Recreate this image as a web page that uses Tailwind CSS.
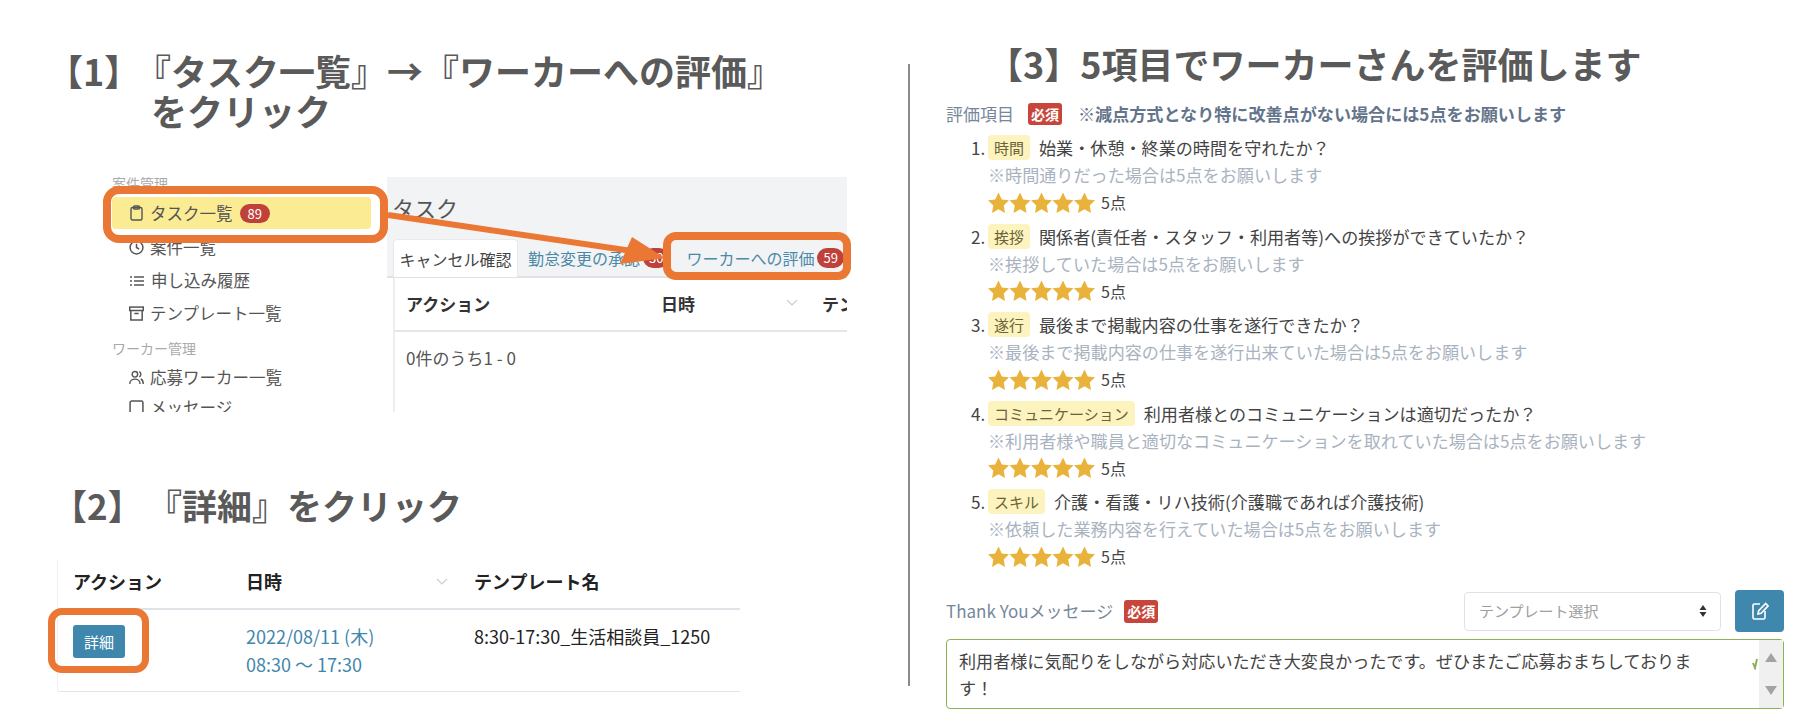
<!DOCTYPE html>
<html lang="ja">
<head>
    <meta charset="UTF-8">
    <title>ワーカーへの評価</title>
    <script src="https://cdn.jsdelivr.net/npm/@tailwindcss/browser@4"></script>
</head>
<body class="bg-white font-['Noto_Sans_CJK_JP','Noto_Sans',sans-serif] text-[#444]">

<svg width="0" height="0" class="absolute">
    <symbol id="stars" viewBox="0 0 107 22">
        <polygon fill="#e9b23b" points="10.5,0.5 13.8,7.5 21,8.3 15.7,13.4 17,21 10.5,17.3 4,21 5.3,13.4 0,8.3 7.2,7.5"/>
        <polygon fill="#e9b23b" transform="translate(21.5 0)" points="10.5,0.5 13.8,7.5 21,8.3 15.7,13.4 17,21 10.5,17.3 4,21 5.3,13.4 0,8.3 7.2,7.5"/>
        <polygon fill="#e9b23b" transform="translate(43 0)" points="10.5,0.5 13.8,7.5 21,8.3 15.7,13.4 17,21 10.5,17.3 4,21 5.3,13.4 0,8.3 7.2,7.5"/>
        <polygon fill="#e9b23b" transform="translate(64.5 0)" points="10.5,0.5 13.8,7.5 21,8.3 15.7,13.4 17,21 10.5,17.3 4,21 5.3,13.4 0,8.3 7.2,7.5"/>
        <polygon fill="#e9b23b" transform="translate(86 0)" points="10.5,0.5 13.8,7.5 21,8.3 15.7,13.4 17,21 10.5,17.3 4,21 5.3,13.4 0,8.3 7.2,7.5"/>
    </symbol>
</svg>

<div class="flex h-[722px] w-[1798px] overflow-hidden">

    <!-- 左カラム -->
    <div class="w-[908px] shrink-0 pt-[50px]">
        <h2 class="flex pl-[47px] text-[36px] leading-[40px] font-bold whitespace-nowrap text-[#5a5a5a]">
            <span class="w-[104px] shrink-0">【1】</span>
            <span><span class="-ml-[16px] inline-block">『タスク一覧』→『ワーカーへの評価』</span><br>をクリック</span>
        </h2>

        <!-- スクリーンショット1 -->
        <div class="relative ml-[100px] mt-[47px] h-[235px] w-[747px]">
            <div class="flex h-full overflow-hidden">
                <div class="w-[287px] shrink-0 pl-[12px] pr-4 text-[16.5px] text-[#555]">
                    <div class="h-[20px] text-[14px] leading-[12px] text-[#aaa]">案件管理</div>
                    <div class="flex h-[32px] items-center gap-[7px] rounded bg-[#fbec93] pl-[18px]">
                        <svg class="h-4 w-[13px]" viewBox="0 0 13 16" fill="none" stroke="#555" stroke-width="1.4"><rect x="1" y="2.5" width="11" height="12.5" rx="1.5"/><rect x="3.5" y="1" width="6" height="3" rx="1"/></svg>
                        <span>タスク一覧</span>
                        <span class="rounded-full bg-[#c0403a] px-2 text-[13px] leading-[19px] text-white">89</span>
                    </div>
                    <div class="flex h-[35px] items-center gap-[6px] pl-[17px] pt-[2px]">
                        <svg class="h-[15px] w-[15px]" viewBox="0 0 14 14" fill="none" stroke="#555" stroke-width="1.4"><circle cx="7" cy="7" r="6"/><path d="M7 3.5V7l2.5 1.5"/></svg>
                        <span>案件一覧</span>
                    </div>
                    <div class="flex h-[33px] items-center gap-[7px] pl-[18px]">
                        <svg class="h-[14px] w-[14px]" viewBox="0 0 14 14" fill="none" stroke="#555" stroke-width="1.3"><path d="M4 3h10M4 7h10M4 11h10M0 3h2M0 7h2M0 11h2"/></svg>
                        <span>申し込み履歴</span>
                    </div>
                    <div class="flex h-[33px] items-center gap-[6px] pl-[17px]">
                        <svg class="h-[15px] w-[15px]" viewBox="0 0 14 14" fill="none" stroke="#555" stroke-width="1.4"><rect x="0.7" y="1" width="12.6" height="3.2"/><path d="M1.7 4.2V13h10.6V4.2M5 7h4"/></svg>
                        <span>テンプレート一覧</span>
                    </div>
                    <div class="mt-[7px] h-[26px] text-[14px] leading-[22px] text-[#aaa]">ワーカー管理</div>
                    <div class="flex h-[29px] items-center gap-[6px] pl-[17px]">
                        <svg class="h-[15px] w-[15px]" viewBox="0 0 14 14" fill="none" stroke="#555" stroke-width="1.3"><circle cx="5.5" cy="4" r="2.6"/><path d="M0.7 13c0-6 9.6-6 9.6 0M9.5 1.6a2.6 2.6 0 0 1 0 4.8M11 8.4c1.5.6 2.3 2.4 2.3 4.6"/></svg>
                        <span>応募ワーカー一覧</span>
                    </div>
                    <div class="flex h-[30px] items-center gap-[6px] pl-[17px]">
                        <svg class="h-[15px] w-[15px]" viewBox="0 0 14 14" fill="none" stroke="#555" stroke-width="1.4"><rect x="1" y="1" width="12" height="12" rx="1.5"/></svg>
                        <span>メッセージ</span>
                    </div>
                </div>
                <div class="flex-1 overflow-hidden">
                    <div class="bg-[#f2f3f5]">
                        <div class="h-[63px] pl-[5px] pt-[15px] text-[22px] leading-[30px] text-[#555]">タスク</div>
                        <div class="flex h-[38px] items-center border-b-2 border-[#e0e2e5] pl-[6px] text-[16px] whitespace-nowrap">
                            <div class="flex h-[38px] w-[125px] items-center justify-center rounded-t border border-b-0 border-[#e8e9eb] bg-white text-[#444]">キャンセル確認</div>
                            <div class="ml-[10px] flex items-center gap-[3px] text-[#4a8aa8]">勤怠変更の承認<span class="rounded-full bg-[#c0403a] px-[6px] text-[13px] leading-[20px] text-white">30</span></div>
                            <div class="ml-[17px] flex items-center gap-[3px] text-[#4a8aa8]">ワーカーへの評価<span class="rounded-full bg-[#c0403a] px-[6px] text-[13px] leading-[20px] text-white">59</span></div>
                        </div>
                    </div>
                    <div class="ml-[6px] h-[140px] border-l-2 border-[#eee] text-[17px]">
                        <div class="grid h-[54px] grid-cols-[255px_161px_1fr] items-center border-b-2 border-[#e6e6e6] pl-[11px] font-bold whitespace-nowrap text-[#333]">
                            <span>アクション</span>
                            <span class="relative">日時
                                <svg class="absolute top-[8px] left-[125px] h-2 w-3" viewBox="0 0 12 8" fill="none" stroke="#ccc" stroke-width="1.2"><path d="M1 1l5 5 5-5"/></svg>
                            </span>
                            <span>テンプレート名</span>
                        </div>
                        <div class="pl-[11px] pt-[14px] leading-[24px] text-[#555]">0件のうち1 - 0</div>
                    </div>
                </div>
            </div>
            <!-- 注釈 -->
            <svg class="absolute top-0 left-0 h-[235px] w-[760px] overflow-visible" viewBox="100 177 760 235" fill="none">
                <rect x="107" y="190" width="277" height="49" rx="12" stroke="#ea7733" stroke-width="8"/>
                <rect x="667" y="236" width="180" height="40" rx="9" stroke="#ea7733" stroke-width="8"/>
                <path d="M388 215L632 251" stroke="#ea7733" stroke-width="6"/>
                <polygon points="632,237 665,258 620,264" fill="#ea7733"/>
            </svg>
        </div>

        <h2 class="mt-[73px] pl-[52px] text-[35px] leading-[40px] font-bold whitespace-nowrap text-[#5a5a5a]">
            <span class="inline-block w-[95px]">【2】</span>『詳細』をクリック
        </h2>

        <!-- スクリーンショット2 -->
        <div class="relative mt-[35px] ml-[57px] h-[131px] w-[683px] border-l border-[#f0f0f0] text-[18px] text-[#222]">
            <div class="grid h-[50px] grid-cols-[188px_228px_1fr] items-center border-b-2 border-[#dfe3e8] pb-[6px] font-bold">
                <span class="pl-[15px]">アクション</span>
                <span class="relative">日時
                    <svg class="absolute top-[10px] left-[190px] h-2 w-3" viewBox="0 0 12 8" fill="none" stroke="#ccc" stroke-width="1.2"><path d="M1 1l5 5 5-5"/></svg>
                </span>
                <span>テンプレート名</span>
            </div>
            <div class="grid h-[82px] grid-cols-[188px_228px_1fr] border-b border-[#e2e5ea] pt-[12px] leading-[28px]">
                <div class="pl-[15px] pt-[3px]">
                    <span class="block h-[33px] w-[52px] rounded-[3px] bg-[#3f87ad] text-center text-[15px] leading-[33px] text-white">詳細</span>
                </div>
                <div class="text-[#3f87ad]">2022/08/11 (木)<br>08:30 〜 17:30</div>
                <div>8:30-17:30_生活相談員_1250</div>
            </div>
            <div class="absolute top-[48px] left-[-10px] h-[65px] w-[101px] rounded-[14px] border-[7px] border-[#ea7733]"></div>
        </div>
    </div>

    <!-- 区切り線 -->
    <div class="mt-[64px] h-[622px] w-[2px] shrink-0 bg-[#8a8a8a]"></div>

    <!-- 右カラム -->
    <div class="flex-1 pt-[43px] pl-[36px] pr-[14px]">
        <h2 class="pl-[41px] text-[36px] leading-[40px] font-bold whitespace-nowrap text-[#5a5a5a]">【3】5項目でワーカーさんを評価します</h2>

        <div class="mt-[20px] flex h-[22px] items-center text-[17.1px] whitespace-nowrap">
            <span class="text-[17px] text-[#76879a]">評価項目</span>
            <span class="ml-[14px] h-[22px] rounded-[3px] bg-[#c8453b] px-[3px] text-[14px] leading-[22px] font-bold text-white">必須</span>
            <span class="ml-[16px] font-bold text-[#64748b]">※減点方式となり特に改善点がない場合には5点をお願いします</span>
        </div>

        <ol class="mt-[9px] pl-[25px] text-[17.1px] leading-[27px]">
            <li class="mb-[7.5px] flex">
                <span class="w-[17px] shrink-0">1.</span>
                <div>
                    <div class="flex items-center"><span class="h-[25px] rounded-sm bg-[#fdf3bf] px-[6px] text-[15px] leading-[25px] text-[#6b6436]">時間</span><span class="ml-[9px]">始業・休憩・終業の時間を守れたか？</span></div>
                    <div class="text-[#a9b3bf]">※時間通りだった場合は5点をお願いします</div>
                    <div class="flex h-[27px] items-center gap-[6px] pt-[2px]"><svg class="h-[22px] w-[107px]"><use href="#stars"/></svg><span class="text-[16px]">5点</span></div>
                </div>
            </li>
            <li class="mb-[7.5px] flex">
                <span class="w-[17px] shrink-0">2.</span>
                <div>
                    <div class="flex items-center"><span class="h-[25px] rounded-sm bg-[#fdf3bf] px-[6px] text-[15px] leading-[25px] text-[#6b6436]">挨拶</span><span class="ml-[9px]">関係者(責任者・スタッフ・利用者等)への挨拶ができていたか？</span></div>
                    <div class="text-[#a9b3bf]">※挨拶していた場合は5点をお願いします</div>
                    <div class="flex h-[27px] items-center gap-[6px] pt-[2px]"><svg class="h-[22px] w-[107px]"><use href="#stars"/></svg><span class="text-[16px]">5点</span></div>
                </div>
            </li>
            <li class="mb-[7.5px] flex">
                <span class="w-[17px] shrink-0">3.</span>
                <div>
                    <div class="flex items-center"><span class="h-[25px] rounded-sm bg-[#fdf3bf] px-[6px] text-[15px] leading-[25px] text-[#6b6436]">遂行</span><span class="ml-[9px]">最後まで掲載内容の仕事を遂行できたか？</span></div>
                    <div class="text-[#a9b3bf]">※最後まで掲載内容の仕事を遂行出来ていた場合は5点をお願いします</div>
                    <div class="flex h-[27px] items-center gap-[6px] pt-[2px]"><svg class="h-[22px] w-[107px]"><use href="#stars"/></svg><span class="text-[16px]">5点</span></div>
                </div>
            </li>
            <li class="mb-[7.5px] flex">
                <span class="w-[17px] shrink-0">4.</span>
                <div>
                    <div class="flex items-center"><span class="h-[25px] rounded-sm bg-[#fdf3bf] px-[6px] text-[15px] leading-[25px] text-[#6b6436]">コミュニケーション</span><span class="ml-[9px]">利用者様とのコミュニケーションは適切だったか？</span></div>
                    <div class="text-[#a9b3bf]">※利用者様や職員と適切なコミュニケーションを取れていた場合は5点をお願いします</div>
                    <div class="flex h-[27px] items-center gap-[6px] pt-[2px]"><svg class="h-[22px] w-[107px]"><use href="#stars"/></svg><span class="text-[16px]">5点</span></div>
                </div>
            </li>
            <li class="flex">
                <span class="w-[17px] shrink-0">5.</span>
                <div>
                    <div class="flex items-center"><span class="h-[25px] rounded-sm bg-[#fdf3bf] px-[6px] text-[15px] leading-[25px] text-[#6b6436]">スキル</span><span class="ml-[9px]">介護・看護・リハ技術(介護職であれば介護技術)</span></div>
                    <div class="text-[#a9b3bf]">※依頼した業務内容を行えていた場合は5点をお願いします</div>
                    <div class="flex h-[27px] items-center gap-[6px] pt-[2px]"><svg class="h-[22px] w-[107px]"><use href="#stars"/></svg><span class="text-[16px]">5点</span></div>
                </div>
            </li>
        </ol>

        <div class="mt-[21px] flex h-[42px] items-center">
            <span class="text-[17px] text-[#76879a]">Thank Youメッセージ</span>
            <span class="ml-[11px] h-[23px] rounded-[3px] bg-[#c8453b] px-[3px] text-[14px] leading-[23px] font-bold text-white">必須</span>
            <div class="ml-auto flex h-[39px] w-[257px] items-center justify-between rounded border border-[#dfe3e8] pr-[13px] pl-[14px] text-[15px] text-[#a0a0a0]">
                テンプレート選択
                <svg class="h-[14px] w-2" viewBox="0 0 8 14" fill="#333"><path d="M4 1l3.5 5h-7zM4 13L.5 8h7z"/></svg>
            </div>
            <div class="ml-[14px] flex h-[42px] w-[49px] items-center justify-center rounded bg-[#3f87ad]">
                <svg class="h-[22px] w-[22px]" viewBox="0 0 22 22" fill="none" stroke="#fff" stroke-width="1.6"><path d="M11 4H5.5A1.5 1.5 0 0 0 4 5.5v12A1.5 1.5 0 0 0 5.5 19h9a1.5 1.5 0 0 0 1.5-1.5V11"/><path d="M9 14l.7-3.3 7-7.2 2.4 2.4-7 7.3z"/></svg>
            </div>
        </div>

        <div class="relative mt-[7px] h-[70px] rounded border border-[#8db255] pl-[12px] pt-[7px] text-[17.1px] leading-[27px]">
            <div class="w-[745px]">利用者様に気配りをしながら対応いただき大変良かったです。ぜひまたご応募おまちしております！</div>
            <svg class="absolute top-[18px] right-[25px] h-[12px] w-[6px]" viewBox="0 0 6 12" fill="none" stroke="#8db255" stroke-width="2"><path d="M1 5l2 5 2-9"/></svg>
            <div class="absolute top-0 right-0 flex h-full w-[24px] flex-col items-center justify-between bg-[#f0f0f0] py-[13px]">
                <svg class="h-[9px] w-[12px]" viewBox="0 0 12 9" fill="#a3a3a3"><path d="M6 0l6 9H0z"/></svg>
                <svg class="h-[9px] w-[12px]" viewBox="0 0 12 9" fill="#a3a3a3"><path d="M6 9L0 0h12z"/></svg>
            </div>
        </div>
    </div>
</div>
</body>
</html>
